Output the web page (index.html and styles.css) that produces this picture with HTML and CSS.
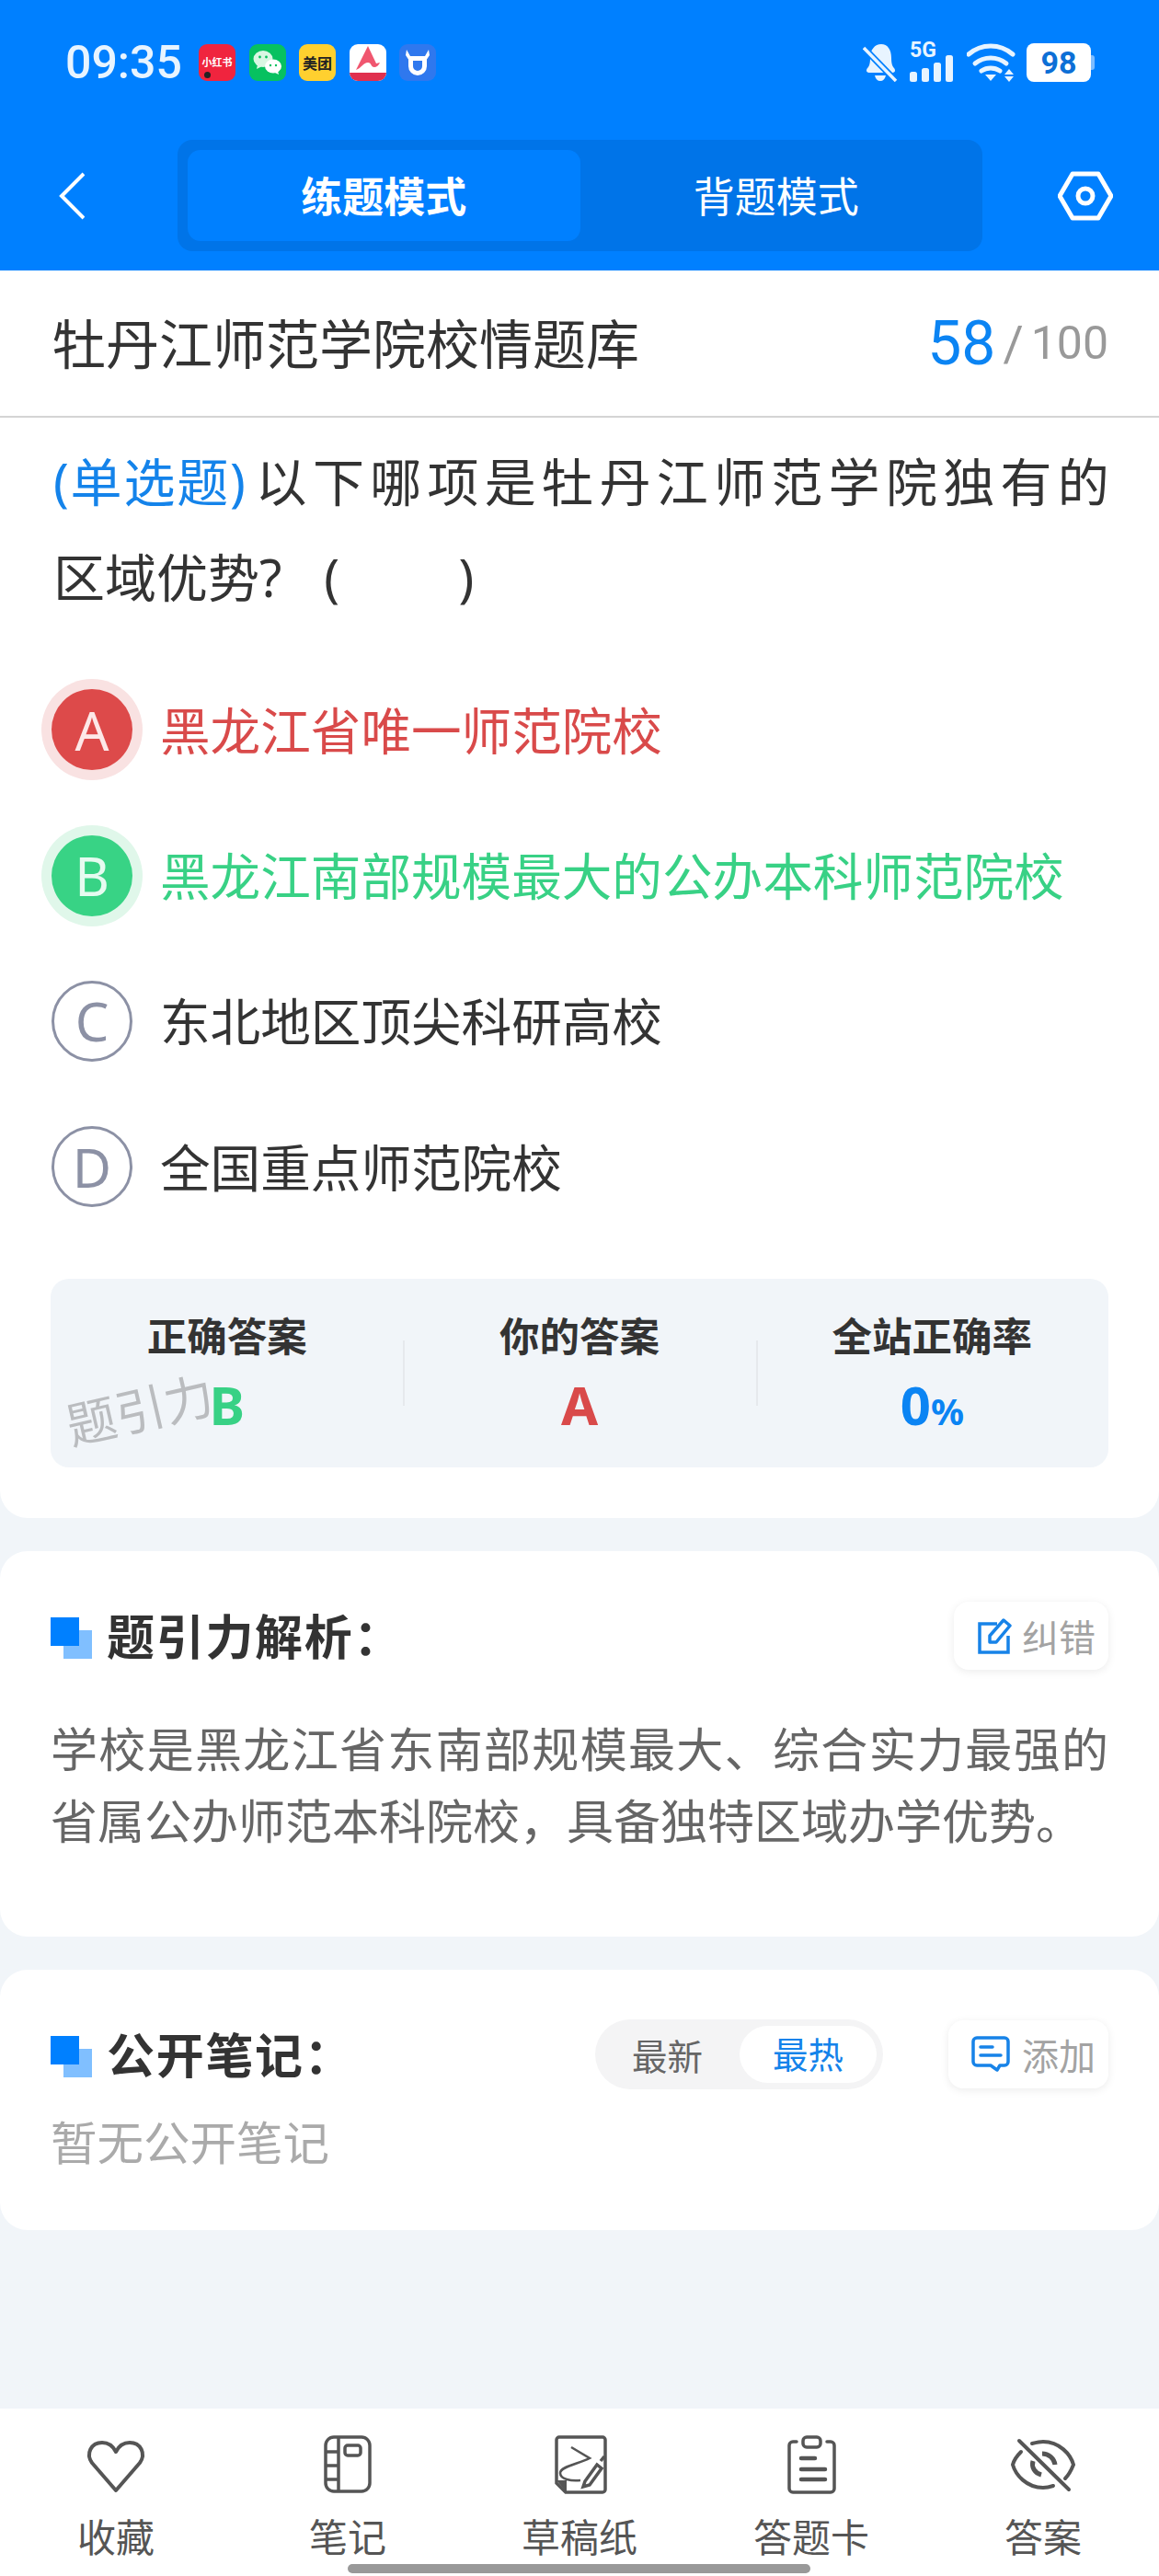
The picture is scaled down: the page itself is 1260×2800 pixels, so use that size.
FILE: index.html
```html
<!DOCTYPE html>
<html lang="zh-CN">
<head>
    <meta charset="UTF-8">
    <meta name="viewport" content="width=device-width, initial-scale=1.0">
    <title>牡丹江师范学院校情题库</title>
    <link rel="stylesheet" href="styles.css">
</head>
<body>
    <header class="top">
        <div class="status-bar">
            <span class="time">09:35</span>
            <div class="app-icons">
                <span class="app app-red">小红书</span>
                <span class="app app-green">
                    <svg viewBox="0 0 40 40" width="40" height="40">
                        <ellipse cx="15" cy="16" rx="10.5" ry="9" fill="#d9f7e3"/>
                        <path d="M9 22l-1 5 6-3z" fill="#d9f7e3"/>
                        <ellipse cx="26" cy="24" rx="9" ry="7.6" fill="#fff"/>
                        <path d="M31 29l1 4-5-2.5z" fill="#fff"/>
                        <circle cx="11.5" cy="14" r="1.4" fill="#07c160"/>
                        <circle cx="18.5" cy="14" r="1.4" fill="#07c160"/>
                        <circle cx="23" cy="23" r="1.2" fill="#07c160"/>
                        <circle cx="29" cy="23" r="1.2" fill="#07c160"/>
                    </svg>
                </span>
                <span class="app app-yellow">美团</span>
                <span class="app app-white">
                    <svg viewBox="0 0 40 40" width="40" height="40">
                        <path d="M0 31h40v3a6 6 0 0 1-6 6H6a6 6 0 0 1-6-6z" fill="#e0304e"/>
                        <path d="M20 2L7 28c6-2 8-8 13-8 4 0 3 5 7 5 2 0 5-2 6-5l-4 1z" fill="#f0566f"/>
                    </svg>
                </span>
                <span class="app app-blue">
                    <svg viewBox="0 0 40 40" width="40" height="40">
                        <path d="M12.500 14v10a7.500 7.500 0 0 0 15 0V14" fill="none" stroke="#fff" stroke-width="5"/>
                        <path d="M8 6l4 7h16l4-7 1 6-4 6H11l-4-6z" fill="#fff"/>
                    </svg>
                </span>
            </div>
            <div class="sys-icons">
                <svg class="bell" viewBox="0 0 38 42" width="38" height="42">
                    <path d="M8 32c-4 0-5-2-3-5 2-2 3-5 3-11C8 7 13 1 20 1s11 6 11 15c0 6 1 9 3 11 2 3 1 5-3 5z" fill="#e8f4ff"/>
                    <path d="M13 35h12c-1 4-3 6-6 6s-5-2-6-6z" fill="#e8f4ff"/>
                    <path d="M1 5l35 36" stroke="#0080ff" stroke-width="7"/>
                    <path d="M1 5l35 36" stroke="#e8f4ff" stroke-width="3.500"/>
                </svg>
                <span class="signal">
                    <span class="five-g">5G</span>
                    <svg viewBox="0 0 48 42" width="48" height="42">
                        <rect x="0" y="31" width="8" height="11" rx="2.500" fill="#e8f4ff"/>
                        <rect x="13" y="27" width="8" height="15" rx="2.500" fill="#e8f4ff"/>
                        <rect x="26" y="21" width="8" height="21" rx="2.500" fill="#e8f4ff"/>
                        <rect x="39" y="13" width="8" height="29" rx="2.500" fill="#e8f4ff"/>
                    </svg>
                </span>
                <svg class="wifi" viewBox="0 0 54 42" width="54" height="42">
                    <path d="M2 12c14-12 34-12 48 0" fill="none" stroke="#e8f4ff" stroke-width="5" stroke-linecap="round"/>
                    <path d="M9 22c10-8 24-8 34 0" fill="none" stroke="#e8f4ff" stroke-width="5" stroke-linecap="round"/>
                    <path d="M16 30c6-4 14-4 20 0" fill="none" stroke="#e8f4ff" stroke-width="5" stroke-linecap="round"/>
                    <path d="M20 34h12l-6 7zM46 28l5 6H41zM46 42l5-6H41z" fill="#e8f4ff"/>
                </svg>
                <span class="battery"><span class="battery-num">98</span><span class="battery-cap"></span></span>
            </div>
        </div>
        <div class="nav-bar">
            <svg class="back" viewBox="0 0 28 52" width="28" height="52">
                <path d="M27 2L3 26l24 24" fill="none" stroke="#fff" stroke-width="4"/>
            </svg>
            <div class="mode-tabs">
                <span class="mode-tab active">练题模式</span>
                <span class="mode-tab">背题模式</span>
            </div>
            <svg class="gear" viewBox="0 0 60 54" width="60" height="54">
                <path d="M16 3h28l14 24-14 24H16L2 27z" fill="none" stroke="#fff" stroke-width="5" stroke-linejoin="round"/>
                <circle cx="30" cy="27" r="8" fill="none" stroke="#fff" stroke-width="5"/>
            </svg>
        </div>
    </header>

    <section class="card question-card">
        <div class="title-row">
            <span class="bank-title">牡丹江师范学院校情题库</span>
            <span class="progress"><b>58</b><i>/</i><span>100</span></span>
        </div>
        <div class="question">
            <div class="q-line q-first">
                <span class="q-type">(单选题)</span>
                <span>以下哪项是牡丹江师范学院独有的</span>
            </div>
            <div class="q-line">
                <span>区域优势?</span>
                <span class="q-blank"><span>(</span><span>)</span></span>
            </div>
        </div>
        <div class="options">
            <div class="option wrong"><span class="letter">A</span>黑龙江省唯一师范院校</div>
            <div class="option right"><span class="letter">B</span>黑龙江南部规模最大的公办本科师范院校</div>
            <div class="option"><span class="letter">C</span>东北地区顶尖科研高校</div>
            <div class="option"><span class="letter">D</span>全国重点师范院校</div>
        </div>
        <div class="stats">
            <div class="stat">
                <div class="stat-label">正确答案</div>
                <div class="stat-value green">B</div>
            </div>
            <div class="stat">
                <div class="stat-label">你的答案</div>
                <div class="stat-value red">A</div>
            </div>
            <div class="stat">
                <div class="stat-label">全站正确率</div>
                <div class="stat-value blue">0<small>%</small></div>
            </div>
            <span class="watermark">题引力</span>
        </div>
    </section>

    <section class="card analysis-card">
        <div class="card-head">
            <h2 class="heading"><span class="squares"></span>题引力解析：</h2>
            <a href="#" class="mini-btn">
                <svg viewBox="0 0 40 40" width="40" height="40">
                    <path d="M22 7H3v31h31V20" fill="none" stroke="#1783e8" stroke-width="3.500"/>
                    <path d="M14 27v-7L29 3l7 6-15 18z" fill="none" stroke="#1783e8" stroke-width="3.500" stroke-linejoin="round"/>
                </svg>
                纠错
            </a>
        </div>
        <p class="analysis-text">学校是黑龙江省东南部规模最大、综合实力最强的省属公办师范本科院校，具备独特区域办学优势。</p>
    </section>

    <section class="card notes-card">
        <div class="card-head">
            <h2 class="heading"><span class="squares"></span>公开笔记：</h2>
            <div class="head-tools">
                <div class="sort">
                    <span class="sort-item">最新</span>
                    <span class="sort-item active">最热</span>
                </div>
                <a href="#" class="mini-btn">
                    <svg viewBox="0 0 46 40" width="46" height="40">
                        <path d="M6 2h30a4 4 0 0 1 4 4v22a4 4 0 0 1-4 4h-5l-3 5-7-5H6a4 4 0 0 1-4-4V6a4 4 0 0 1 4-4z" fill="none" stroke="#1783e8" stroke-width="3.500" stroke-linejoin="round"/>
                        <path d="M10 12h13M10 21h22" stroke="#1783e8" stroke-width="3.500" stroke-linecap="round"/>
                    </svg>
                    添加
                </a>
            </div>
        </div>
        <p class="no-notes">暂无公开笔记</p>
    </section>

    <nav class="bottom-nav">
        <a href="#" class="nav-item">
            <svg viewBox="0 0 72 72" width="72" height="72">
                <path d="M36 60L10 30C3 20 9 8 21 8c7 0 12 4 15 10 3-6 8-10 15-10 12 0 18 12 11 22z" fill="none" stroke="#555" stroke-width="4" stroke-linejoin="round"/>
            </svg>
            <span>收藏</span>
        </a>
        <a href="#" class="nav-item">
            <svg viewBox="0 0 72 72" width="72" height="72">
                <rect x="12" y="2" width="48" height="59" rx="9" fill="none" stroke="#555" stroke-width="3.500"/>
                <path d="M26 2v59M12 18h14M12 33h14M12 48h14" fill="none" stroke="#555" stroke-width="3.500"/>
                <rect x="33" y="11" width="17" height="11" rx="3" fill="none" stroke="#555" stroke-width="3.500"/>
            </svg>
            <span>笔记</span>
        </a>
        <a href="#" class="nav-item">
            <svg viewBox="0 0 72 72" width="72" height="72">
                <path d="M21 62L11 52V5a3 3 0 0 1 3-3h47a3 3 0 0 1 3 3v54a3 3 0 0 1-3 3z" fill="none" stroke="#555" stroke-width="3.500"/>
                <path d="M11 49h11v13z" fill="#555"/>
                <path d="M27 13l20 12c-12 6-32 9-32 16s12 9 22 8" fill="none" stroke="#555" stroke-width="2.500"/>
                <path d="M42 50l13-18 5 4-13 18-7 2zM59 28l4-5" fill="none" stroke="#555" stroke-width="3.500"/>
            </svg>
            <span>草稿纸</span>
        </a>
        <a href="#" class="nav-item">
            <svg viewBox="0 0 72 72" width="72" height="72">
                <path d="M20 7h-4a4 4 0 0 0-4 4v47a4 4 0 0 0 4 4h41a4 4 0 0 0 4-4V11a4 4 0 0 0-4-4h-4" fill="none" stroke="#555" stroke-width="3.500" stroke-linecap="round"/>
                <rect x="27" y="2" width="19" height="11" rx="4" fill="none" stroke="#555" stroke-width="3.500"/>
                <path d="M25 25h15M25 37h26M25 48h26" stroke="#555" stroke-width="4.500" stroke-linecap="round"/>
            </svg>
            <span>答题卡</span>
        </a>
        <a href="#" class="nav-item">
            <svg viewBox="0 0 72 72" width="72" height="72">
                <path d="M12 18C7 23 4 28 3 32c3 11 15 25 33 25 4 0 8-1 11-2M24 9c4-1 8-2 12-2 18 0 30 14 33 25-2 5-5 11-9 15" fill="none" stroke="#555" stroke-width="4" stroke-linecap="round"/>
                <path d="M25 28c-2 7 2 13 9 15M35 20c7 0 13 5 14 12" fill="none" stroke="#555" stroke-width="5"/>
                <path d="M10 6l54 53" stroke="#555" stroke-width="4" stroke-linecap="round"/>
            </svg>
            <span>答案</span>
        </a>
        <span class="home-bar"></span>
    </nav>
</body>
</html>
```

FILE: styles.css
```css
* {
    box-sizing: border-box;
}

body {
    font-family: "Noto Sans", "Noto Sans CJK SC", sans-serif;
    background-color: #f1f5f9;
    margin: 0;
    width: 1260px;
    height: 2800px;
    display: flex;
    flex-direction: column;
    color: #333;
}

a {
    text-decoration: none;
    color: inherit;
}

p, h2 {
    margin: 0;
}

/* header */
.top {
    background-color: #0080ff;
    height: 294px;
    flex-shrink: 0;
}

.status-bar {
    height: 152px;
    padding: 47px 70px 0 71px;
    display: flex;
    align-items: flex-start;
}

.time {
    font-family: Roboto, sans-serif;
    font-size: 50px;
    font-weight: 500;
    line-height: 42px;
    color: #e8f4ff;
    width: 145px;
}

.app-icons {
    display: flex;
    gap: 14.5px;
    margin-top: 1px;
}

.app {
    position: relative;
    width: 40px;
    height: 40px;
    border-radius: 9px;
    overflow: hidden;
    display: flex;
    align-items: center;
    justify-content: center;
    font-family: "Noto Sans CJK SC", sans-serif;
    white-space: nowrap;
}

.app-red {
    background-color: #f0243e;
    color: #fff;
    font-size: 11px;
    font-weight: 700;
    padding-bottom: 3px;
}

/* little black dot on the red app */
.app-red::after {
    content: "";
    position: absolute;
    left: 6px;
    bottom: 3px;
    width: 7px;
    height: 7px;
    border-radius: 50%;
    background-color: #222;
}

.app-green {
    background-color: #07c160;
}

.app-yellow {
    background-color: #ffd02f;
    color: #222;
    font-size: 16px;
    font-weight: 700;
}

.app-white {
    background-color: #fff;
}

.app-blue {
    background-color: #2f78ee;
}

.sys-icons {
    margin-left: auto;
    display: flex;
    align-items: center;
    height: 42px;
}

.signal {
    position: relative;
    width: 50px;
    height: 42px;
    margin-left: 13px;
}

.five-g {
    position: absolute;
    left: 0;
    top: -4px;
    font-family: Roboto, sans-serif;
    font-size: 23px;
    line-height: 24px;
    font-weight: 700;
    color: #e8f4ff;
}

.wifi {
    margin-left: 12px;
}

.battery {
    display: flex;
    align-items: center;
    margin-left: 11px;
}

.battery-num {
    width: 70px;
    height: 42px;
    border-radius: 8px;
    background-color: #fff;
    color: #0d6fd6;
    font-family: Roboto, sans-serif;
    font-size: 34px;
    line-height: 42px;
    font-weight: 700;
    text-align: center;
}

.battery-cap {
    width: 4px;
    height: 16px;
    background-color: #7dbcff;
    border-radius: 0 3px 3px 0;
}

.nav-bar {
    height: 121px;
    display: flex;
    align-items: center;
    padding: 0 50px 0 64px;
}

.back {
    margin-right: 101px;
}

.mode-tabs {
    width: 875px;
    height: 121px;
    padding: 11px;
    background-color: #0074e8;
    border-radius: 16px;
    display: flex;
    margin-right: 82px;
}

.mode-tab {
    flex: 1;
    color: #fff;
    font-size: 45px;
    display: flex;
    align-items: center;
    justify-content: center;
    border-radius: 14px;
    padding-bottom: 3px;
}

.mode-tab.active {
    background-color: #0080ff;
    font-weight: 700;
}

/* cards */
.card {
    background-color: #fff;
    border-radius: 30px;
}

.question-card {
    height: 1356px;
    border-radius: 0 0 30px 30px;
    margin-bottom: 36px;
    flex-shrink: 0;
}

.title-row {
    height: 160px;
    padding: 0 55px 0 57px;
    display: flex;
    align-items: center;
    justify-content: space-between;
    border-bottom: 2px solid #d4d4d4;
}

.bank-title {
    font-size: 58px;
    margin-bottom: 4px;
}

.progress {
    display: flex;
    align-items: center;
    font-family: Roboto, sans-serif;
    font-size: 50px;
    color: #999;
}

.progress b {
    font-weight: 400;
    font-size: 66px;
    color: #0b84f3;
}

.progress i {
    font-style: normal;
    font-size: 54px;
    margin: 0 8px;
}

.question {
    padding: 17px 40px 0 58px;
    font-size: 56px;
    line-height: 104px;
}

.q-line {
    display: flex;
    white-space: nowrap;
}

/* first line is stretched to the full width, the second is not */
.q-first {
    letter-spacing: 6.3px;
}

.q-type {
    color: #1483ea;
    letter-spacing: 1.8px;
    margin-right: 9px;
}

.q-blank {
    width: 163px;
    margin-left: 46px;
    display: flex;
    justify-content: space-between;
}

.options {
    margin-top: 33px;
}

.option {
    height: 158.4px;
    padding-left: 56px;
    display: flex;
    align-items: center;
    font-size: 54.6px;
    color: #333;
}

.letter {
    width: 88px;
    height: 88px;
    margin-top: 4px;
    border-radius: 50%;
    border: 3px solid #8c91a5;
    color: #8c91a5;
    font-size: 58px;
    font-weight: 400;
    display: flex;
    align-items: center;
    justify-content: center;
    margin-right: 30px;
    flex-shrink: 0;
}

.wrong {
    color: #d94a4a;
}

.wrong .letter {
    background-color: #dd4a4a;
    border: none;
    color: #fde8e8;
    box-shadow: 0 0 0 11px #f9e2e2;
}

.right {
    color: #38d185;
}

.right .letter {
    background-color: #38d385;
    border: none;
    color: #e6fbf0;
    box-shadow: 0 0 0 11px #e0f7ea;
}

.stats {
    position: relative;
    margin: 44px 55px 0;
    height: 205px;
    background-color: #f1f5f9;
    border-radius: 20px;
    display: grid;
    grid-template-columns: repeat(3, 1fr);
    padding: 34px 0 0;
}

.stat {
    text-align: center;
    height: 130px;
}

.stat + .stat {
    background: linear-gradient(#e6e9ed, #e6e9ed) left 33px / 2px 71px no-repeat;
}

.stat-label {
    font-size: 43.5px;
    line-height: 56px;
    font-weight: 700;
}

.stat-value {
    font-size: 58px;
    line-height: 72px;
    font-weight: 700;
    margin-top: 11px;
}

.stat-value small {
    font-size: 40px;
}

.green {
    color: #38d185;
}

.red {
    color: #d94a4a;
}

.blue {
    color: #0b84f3;
}

.watermark {
    position: absolute;
    left: 16px;
    top: 112px;
    font-size: 54px;
    line-height: 60px;
    color: rgba(120, 120, 120, 0.45);
    transform: rotate(-13deg);
}

.analysis-card {
    height: 419px;
    margin-bottom: 36px;
    padding: 55px 55px 0;
    flex-shrink: 0;
}

.notes-card {
    height: 283px;
    padding: 55px 55px 0;
    flex-shrink: 0;
}

.card-head {
    display: flex;
    align-items: center;
    justify-content: space-between;
    height: 74px;
}

.heading {
    display: flex;
    align-items: center;
    font-size: 52px;
    font-weight: 700;
    letter-spacing: 1.7px;
    padding-bottom: 4px;
}

.squares {
    width: 45px;
    height: 45px;
    margin: 8px 16px 0 0;
    background: linear-gradient(#0080ff, #0080ff) left top / 31px 31px no-repeat,
        linear-gradient(#80bfff, #80bfff) right bottom / 31px 31px no-repeat;
}

.mini-btn {
    height: 74px;
    padding: 0 14px 0 25px;
    background-color: #fff;
    border-radius: 16px;
    box-shadow: 0 2px 10px rgba(0, 0, 0, 0.08);
    display: flex;
    align-items: center;
    gap: 9px;
    font-size: 40px;
    color: #a3a3a3;
}

.analysis-text {
    margin-top: 47px;
    font-size: 51px;
    line-height: 78px;
    text-align: justify;
    color: #666;
}

.head-tools {
    display: flex;
    align-items: center;
    gap: 71px;
}

.sort {
    width: 313px;
    height: 76px;
    border-radius: 38px;
    background-color: #f4f4f5;
    padding-right: 7px;
    display: flex;
    align-items: center;
}

.sort-item {
    font-size: 38.5px;
    color: #666;
    width: 157px;
    text-align: center;
}

.sort-item.active {
    width: 149px;
    height: 62px;
    line-height: 62px;
    background-color: #fff;
    color: #1483ea;
    border-radius: 31px;
}

.no-notes {
    margin-top: 24px;
    font-size: 50.5px;
    line-height: 70px;
    color: #aaa;
}

/* bottom bar */
.bottom-nav {
    position: relative;
    margin-top: auto;
    height: 182px;
    background-color: #fff;
    display: grid;
    grid-template-columns: repeat(5, 1fr);
    flex-shrink: 0;
}

.nav-item {
    display: flex;
    flex-direction: column;
    align-items: center;
    padding-top: 29px;
    color: #555;
    font-size: 42px;
    line-height: 50px;
}

.nav-item svg {
    margin-bottom: 14px;
}

.home-bar {
    position: absolute;
    left: 378px;
    top: 169px;
    width: 503px;
    height: 10px;
    border-radius: 5px;
    background-color: #999;
}
```
